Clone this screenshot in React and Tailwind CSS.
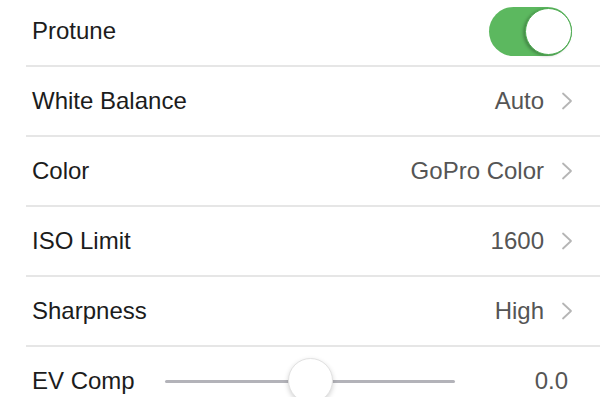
import React from 'react';

const rows = [
  { label: 'White Balance', value: 'Auto' },
  { label: 'Color', value: 'GoPro Color' },
  { label: 'ISO Limit', value: '1600' },
  { label: 'Sharpness', value: 'High' },
];

function Chevron() {
  return (
    <svg width="12" height="18" viewBox="0 0 12 18" className="ml-[17px] shrink-0">
      <path d="M2 1.5 L10 9 L2 16.5" fill="none" stroke="#b5b5b5" strokeWidth="1.8" strokeLinecap="round" strokeLinejoin="round" />
    </svg>
  );
}

function Toggle() {
  return (
    <div className="w-[83px] h-[49px] rounded-full bg-[#5cb85f] relative shrink-0">
      <div className="absolute right-0 top-[1px] w-[47px] h-[47px] rounded-full bg-white border border-[#4caa50] shadow-[-2px_1px_3px_rgba(0,0,0,0.25)]" />
    </div>
  );
}

export default function App() {
  return (
    <div className="w-[600px] h-[397px] overflow-hidden bg-white text-[24px] text-[#1c1c1c]" style={{ fontFamily: '"Liberation Sans", Arial, sans-serif' }}>
      <div className="-mt-[3px]">
        <div className="ml-[26px] border-b-2 border-[#e6e6e6]">
          <div className="h-[68px] flex items-center pl-[6px] pr-[28px]">
            <span className="flex-1">Protune</span>
            <Toggle />
          </div>
        </div>
        {rows.map((r) => (
          <div key={r.label} className="ml-[26px] border-b-2 border-[#e6e6e6]">
            <div className="h-[68px] flex items-center pl-[6px] pr-[27px]">
              <span className="flex-1">{r.label}</span>
              <span className="text-[#555555]">{r.value}</span>
              <Chevron />
            </div>
          </div>
        ))}
        <div className="ml-[26px]">
          <div className="h-[68px] flex items-center pl-[6px] pr-[32px]">
            <span className="w-[133px] shrink-0">EV Comp</span>
            <div className="relative w-[290px] h-[3px] bg-[#b3b3b9] rounded-full">
              <div className="absolute left-[123px] -top-[22px] w-[45px] h-[45px] rounded-full bg-white border border-[#e2e2e2] shadow-[0_2px_5px_rgba(0,0,0,0.18)]" />
            </div>
            <span className="ml-auto text-[#555555]">0.0</span>
          </div>
        </div>
      </div>
    </div>
  );
}
